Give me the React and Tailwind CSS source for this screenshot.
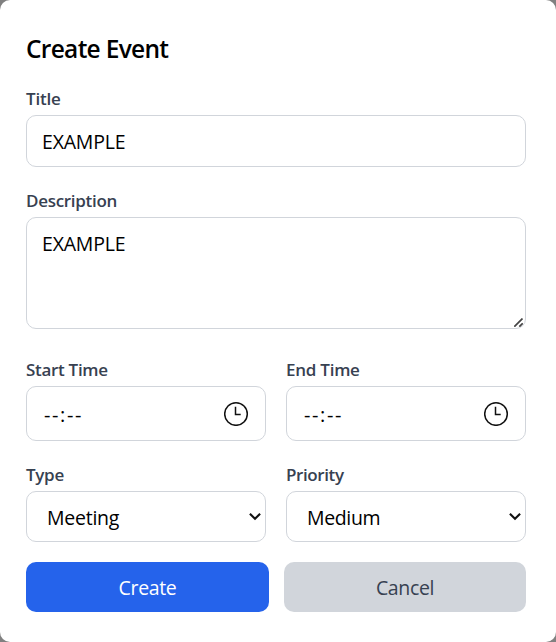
const grip = (
  <svg className="absolute right-[3px] bottom-[2px] h-[9px] w-[9px]" viewBox="0 0 9 9" stroke="#444" strokeWidth="1.7" fill="none">
    <path d="M0.3 8.7L8.5 0.5M5.3 8.7L8.7 5.3" />
  </svg>
);

function Label({ id, children, className }) {
  return (
    <label htmlFor={id} className={`block h-[33px] pt-[5px] text-[17px] leading-[24px] font-semibold whitespace-nowrap text-[#374151] ${className}`}>
      {children}
    </label>
  );
}

function TimeField({ label, className }) {
  return (
    <div>
      <Label className={className}>{label}</Label>
      <div className="flex h-[55px] items-center justify-between rounded-[10px] border border-[#d1d5db] pr-[16px] pl-[17px]">
        <span className="pt-[2px] text-[20px] leading-[28px] tracking-[1.6px]">--:--</span>
        <svg className="h-[25px] w-[25px]" viewBox="0 0 25 25" fill="none" stroke="#111">
          <circle cx="12" cy="13" r="11.3" strokeWidth="1.5" />
          <path d="M11.5 5.7V13.6H16.7" strokeWidth="1.5" />
        </svg>
      </div>
    </div>
  );
}

function SelectField({ id, label, value, className, textClass }) {
  return (
    <div>
      <Label id={id} className={className}>{label}</Label>
      <div className="relative">
        <select id={id} defaultValue={value} className={`block h-[51px] w-full appearance-none rounded-[10px] border border-[#d1d5db] bg-white pt-[3px] pl-[20px] text-[19.5px] leading-[28px] text-black outline-none ${textClass}`}>
          <option>{value}</option>
        </select>
        <svg className="pointer-events-none absolute top-[21px] right-[5px] h-[9px] w-[12px]" viewBox="0 0 12 9" fill="none" stroke="#111" strokeWidth="2.1">
          <path d="M0.9 1.7L6 6.8L11.1 1.7" />
        </svg>
      </div>
    </div>
  );
}

export default function App() {
  return (
    <div className="h-[642px] w-[556px] bg-[#808080] font-['Open_Sans','Noto_Sans',sans-serif] text-black">
      <form className="h-full rounded-[10px] bg-white pt-[32px] pr-[30px] pl-[26px]">
        <h2 className="h-[50px] text-[24.5px] leading-[34px] font-semibold tracking-[-0.7px] whitespace-nowrap">Create Event</h2>
        <Label id="title" className="tracking-[-0.2px]">Title</Label>
        <input id="title" defaultValue="EXAMPLE" className="block h-[52px] w-full rounded-[10px] border border-[#d1d5db] pl-[15px] text-[19.5px] tracking-[-0.2px] outline-none" />
        <div className="mt-[17px]">
          <Label id="description" className="tracking-[-0.3px]">Description</Label>
          <div className="relative">
            <textarea id="description" defaultValue="EXAMPLE" className="block h-[112px] w-full resize-none rounded-[10px] border border-[#d1d5db] pt-[12px] pl-[15px] text-[19.5px] leading-[28px] tracking-[-0.2px] outline-none" />
            {grip}
          </div>
        </div>
        <div className="mt-[24px] grid grid-cols-2 gap-x-[20px] gap-y-[17px]">
          <TimeField label="Start Time" className="tracking-[-0.3px]" />
          <TimeField label="End Time" className="tracking-[-0.25px]" />
          <SelectField id="type" label="Type" value="Meeting" className="tracking-[-0.3px]" textClass="tracking-[-0.25px]" />
          <SelectField id="priority" label="Priority" value="Medium" className="tracking-[-0.4px]" textClass="tracking-[-0.35px]" />
        </div>
        <div className="mt-[20px] -mr-px flex gap-[15px]">
          <button type="button" className="h-[50px] w-[243px] rounded-[10px] bg-[#2563eb] pt-[2px] text-[19.5px] tracking-[-0.35px] text-white">Create</button>
          <button type="button" className="h-[50px] w-[242px] rounded-[10px] bg-[#d1d5db] pt-[2px] text-[19.5px] tracking-[-0.35px] text-[#374151]">Cancel</button>
        </div>
      </form>
    </div>
  );
}
